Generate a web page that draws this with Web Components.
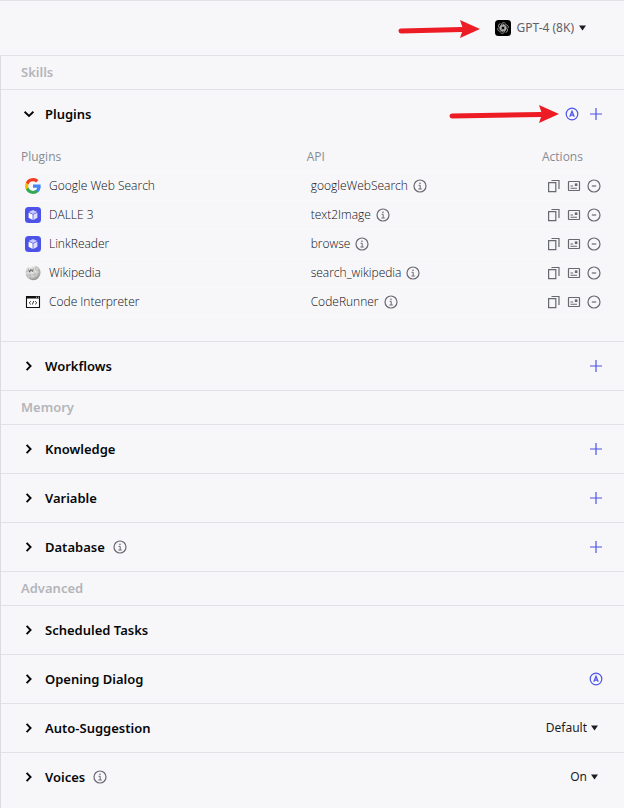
<!DOCTYPE html>
<html lang="en">
<head>
<meta charset="utf-8">
<title>Bot skills</title>
<style>
  html { background: #f7f7fa; }
  body { margin: 0; font-family: "Noto Sans", "Open Sans", sans-serif; color: #1c1d23; }
</style>
</head>
<body>
<bot-settings></bot-settings>
<script>
const define = (name, html, setup) => {
  const template = document.createElement('template');
  template.innerHTML = html;
  customElements.define(name, class extends HTMLElement {
    constructor() {
      super();
      this.attachShadow({ mode: 'open' }).append(template.content.cloneNode(true));
    }
    connectedCallback() { if (setup) setup(this, this.shadowRoot); }
  });
};

const icons = {
  info: '<circle cx="8" cy="8" r="6" stroke="currentColor" stroke-width="1.2"/><path d="M6.600 7.300h1.600v3.500M6.400 11h3.400" stroke="currentColor"/><circle cx="8" cy="5.200" r=".8" fill="currentColor"/>',
  plus: '<path d="M8 2v12M2 8h12" stroke="currentColor" stroke-width="1.200"/>',
  auto: '<circle cx="8" cy="8" r="5.800" stroke="currentColor" stroke-width="1.200"/><path d="M5.800 10.700 8 5.200l2.200 5.500M6.700 9.100h2.600" stroke="currentColor" stroke-width="1.200"/>',
  copy: '<path d="M2.600 4.600h7.200v9H2.600z" stroke="currentColor" stroke-width="1.200"/><path d="M5.500 2.500h7.500v8.500" stroke="currentColor" stroke-width="1.200"/>',
  card: '<rect x="2.500" y="3.500" width="11" height="9" rx=".5" stroke="currentColor" stroke-width="1.200"/><path d="M4.500 8h2.600M4.500 10.300h6.500" stroke="currentColor" stroke-width="1.100"/><path d="M8.800 5.400h2.600v2.600H8.800z" fill="currentColor"/>',
  minus: '<circle cx="8" cy="8" r="6" stroke="currentColor" stroke-width="1.200"/><path d="M5.800 8h4.400" stroke="currentColor" stroke-width="1.200"/>',
  right: '<path d="m5.600 3.800 4 4.200-4 4.200" stroke="currentColor" stroke-width="1.900"/>',
  down: '<path d="M3.600 5.700 8 10l4.400-4.300" stroke="currentColor" stroke-width="1.900"/>',
  google: '<path fill="#4285f4" d="M15.700 8.200c0-.6-.1-1.100-.2-1.600H8v3.100h4.300a3.700 3.700 0 0 1-1.600 2.400v2h2.600c1.500-1.400 2.400-3.400 2.400-5.900z"/><path fill="#34a853" d="M8 16c2.200 0 4-.7 5.300-1.900l-2.600-2A4.800 4.800 0 0 1 3.500 9.500H.9v2.100A8 8 0 0 0 8 16z"/><path fill="#fbbc05" d="M3.500 9.500a4.800 4.800 0 0 1 0-3.100V4.400H.9a8 8 0 0 0 0 7.200z"/><path fill="#f33b21" d="M8 3.200c1.200 0 2.300.4 3.100 1.200l2.300-2.300A8 8 0 0 0 .9 4.400l2.600 2.100A4.800 4.800 0 0 1 8 3.200z"/>',
  cube: '<rect width="16" height="16" rx="3.500" fill="#4d53e8"/><path fill="#c8caff" d="m8 3 4.300 1.900L8 6.900 3.700 4.900z"/><path fill="#fff" d="m3.600 5.700 4 1.800v5.400l-4-2.100z"/><path fill="#dddeff" d="m12.400 5.700-4 1.800v5.400l4-2.100z"/>',
  wiki: '<defs><radialGradient id="globe" cx=".4" cy=".35" r=".7"><stop stop-color="#f2f2f0"/><stop offset=".6" stop-color="#cececc"/><stop offset="1" stop-color="#858585"/></radialGradient></defs><path fill="url(#globe)" d="M2.200 2.800 4 2l1.500 1.200L7 1.300l2 .7L10.500.8c3 1 5 3.600 5 6.700A7.500 7.500 0 0 1 8 15.200 7.500 7.500 0 0 1 .6 8c0-2 .6-3.800 1.600-5.200z"/><path d="M1 6.500 4.500 6l1-2.500M10.500 4.900l.7-3M4.500 6l.8 4 4-.6L8.500 5M9.300 9.400l5.500-.7M10.500 5l4.300.5M5.300 10l.7 4.500M9.300 9.400l1.700 4.800M1.200 10.400l4-.4" stroke="#a2a2a0" stroke-width=".5"/><path d="m3.500 4.500 1.300 2.600L6 4.300l1.300 2.400 1-3" stroke="#555" stroke-width=".8"/>',
  code: '<path d="M1.500 2.500h13v11h-13z" fill="#fff" stroke="#111" stroke-width="1.100"/><path d="M1 2h14v2.500H1z" fill="#111"/><path d="M11 3.200h1M13 3.200h1" stroke="#fff" stroke-width=".8"/><path d="M5.900 7.200 4.200 8.800l1.700 1.600M10.100 7.200l1.700 1.600-1.700 1.600M8.700 7l-1.400 3.600" stroke="#222" stroke-width=".9"/>',
  gpt: '<rect width="16" height="16" rx="3.500" fill="#000"/><g stroke="#c4c4c4" stroke-width=".7">' + [0, 60, 120, 180, 240, 300].map(a => `<path transform="rotate(${a} 8 8)" d="M6.300 9V4.900A2.400 2.400 0 0 1 10.500 3.500M6.300 5.900 8 4.900l3.600 2.100"/>`).join('') + '</g>',
};

define('ui-icon', `
  <style>
    :host { display: inline-flex; flex: none; width: 16px; height: 16px; }
    svg { display: block; width: 100%; height: 100%; }
  </style>
  <svg viewBox="0 0 16 16" fill="none" aria-hidden="true"></svg>`,
  (el, root) => { root.querySelector('svg').innerHTML = icons[el.getAttribute('name')]; });

define('icon-button', `
  <style>
    :host { display: inline-flex; flex: none; color: var(--icon-color, #686970); }
    button { display: flex; margin: 0; padding: 0; border: 0; background: none; color: inherit; cursor: pointer; }
  </style>
  <button type="button"></button>`,
  (el, root) => {
    const button = root.querySelector('button');
    button.setAttribute('aria-label', el.getAttribute('label'));
    button.innerHTML = `<ui-icon name="${el.getAttribute('name')}"></ui-icon>`;
  });

define('value-select', `
  <style>
    :host { display: inline-flex; color: #1c1d23; }
    label { display: flex; align-items: center; gap: var(--value-gap, 4px); }
    select { appearance: none; field-sizing: content; margin: 0; padding: 0; border: 0; background: none;
             font: 12px/20px "Noto Sans", sans-serif; color: var(--value-color, inherit); }
    svg { width: 7px; height: 6px; }
  </style>
  <label><slot></slot><select></select>
    <svg viewBox="0 0 7 6" aria-hidden="true"><path d="M0 .5h7L3.500 5.500z" fill="#1c1d23"/></svg></label>`,
  (el, root) => {
    const select = root.querySelector('select');
    select.setAttribute('aria-label', el.getAttribute('label'));
    select.replaceChildren(new Option(el.getAttribute('value')));
  });

define('group-label', `
  <style>
    :host { display: block; padding: 0 20px; border-bottom: 1px solid #e2e2e6; }
    h2 { margin: 0; font-size: 13px; font-weight: 600; line-height: 33px; color: #b4b5b9; }
  </style>
  <h2><slot></slot></h2>`);

define('settings-section', `
  <style>
    :host { display: block; border-bottom: 1px solid #e2e2e6; }
    header { display: flex; align-items: center; height: 48px; padding: 0 20px; }
    h3 { margin: 0; font-size: 13px; font-weight: 600; line-height: 20px; color: #060709; }
    .toggle { display: flex; align-items: center; gap: 8px; margin: 0; padding: 0; border: 0;
              background: none; font: inherit; color: inherit; cursor: pointer; }
    .mark { display: flex; }
    .actions { display: flex; align-items: center; gap: 8px; margin-left: auto; --icon-color: #4d53e8; }
  </style>
  <header>
    <h3><button class="toggle" type="button"><span class="mark"></span><span class="text"></span></button></h3>
    <slot name="info"></slot>
    <div class="actions"><slot name="actions"></slot></div>
  </header>
  <slot></slot>`,
  (el, root) => {
    const open = el.hasAttribute('open');
    root.querySelector('.mark').innerHTML = `<ui-icon name="${open ? 'down' : 'right'}"></ui-icon>`;
    root.querySelector('.text').textContent = el.getAttribute('heading');
    root.querySelector('.toggle').setAttribute('aria-expanded', open);
  });

define('plugin-table', `
  <style>
    :host { display: block; padding: 5px 20px 24px; font-family: "Open Sans", "Noto Sans", sans-serif; }
    table { width: 100%; table-layout: fixed; border-collapse: collapse; font-size: 12px; line-height: 20px; }
    th, td { height: 28px; padding: 0; text-align: left; border-bottom: 1px solid #f9f9fb; white-space: nowrap; }
    th { font-weight: 400; color: #888a92; }
    td { font-weight: 300; color: #0c0d12; }
    th:first-child { width: 49%; }
    th:last-child { width: 62px; }
    td > div { display: flex; align-items: center; padding-left: 4px; }
    .name { gap: 8px; }
    .api, .tools { gap: 4px; }
  </style>
  <table>
    <thead><tr><th>Plugins</th><th>API</th><th>Actions</th></tr></thead>
    <tbody></tbody>
  </table>`,
  (el, root) => {
    root.querySelector('tbody').innerHTML = [
      ['google', 'Google Web Search', 'googleWebSearch'],
      ['cube', 'DALLE 3', 'text2Image'],
      ['cube', 'LinkReader', 'browse'],
      ['wiki', 'Wikipedia', 'search_wikipedia'],
      ['code', 'Code Interpreter', 'CodeRunner'],
    ].map(([icon, name, api]) => `<tr>
      <td><div class="name"><ui-icon name="${icon}"></ui-icon><span>${name}</span></div></td>
      <td><div class="api"><span>${api}</span><icon-button name="info" label="About ${api}"></icon-button></div></td>
      <td><div class="tools"><icon-button name="copy" label="Copy"></icon-button><icon-button name="card" label="Bind card"></icon-button><icon-button name="minus" label="Remove"></icon-button></div></td>
    </tr>`).join('');
  });

define('pointer-arrow', `
  <style>
    :host { position: absolute; height: 20px; pointer-events: none; }
    svg { display: block; height: 100%; }
  </style>
  <svg fill="none" aria-hidden="true"></svg>`,
  (el, root) => {
    const length = Number(el.getAttribute('length'));
    const svg = root.querySelector('svg');
    svg.setAttribute('width', length);
    svg.setAttribute('viewBox', `0 0 ${length} 20`);
    svg.innerHTML = `<path d="M3 12 ${length - 18} 10.500" stroke="#ed1c24" stroke-width="5" stroke-linecap="round"/>
      <path d="m${length - 20} 1 20 9-20 9 3-9z" fill="#ed1c24"/>`;
  });

define('bot-settings', `
  <style>
    :host { display: flex; flex-direction: column; min-height: 100vh; box-sizing: border-box;
            background: #f7f7fa; border-top: 1px solid #e2e2e6; }
    .top { position: relative; display: flex; justify-content: flex-end; align-items: center;
           height: 54px; padding: 0 38px 0 20px; border-bottom: 1px solid #e2e2e6; }
    .top value-select { --value-color: #5f6068; --value-gap: 5px; }
    .top pointer-arrow { right: 144px; top: 18px; }
    .panel { flex: 1; border-left: 1px solid #dcdce1; }
    .plugins { position: relative; }
    .plugins pointer-arrow { right: 65px; top: 14px; }
    settings-section > value-select { margin-right: 6px; }
    settings-section > icon-button[slot=info] { margin-left: 7px; }
    settings-section:last-child { border-bottom: 0; }
  </style>
  <header class="top">
    <value-select label="Model" value="GPT-4 (8K)"><ui-icon name="gpt"></ui-icon></value-select>
    <pointer-arrow length="82"></pointer-arrow>
  </header>
  <main class="panel">
    <group-label>Skills</group-label>
    <settings-section class="plugins" heading="Plugins" open>
      <icon-button slot="actions" name="auto" label="Add plugins automatically"></icon-button>
      <icon-button slot="actions" name="plus" label="Add plugin"></icon-button>
      <plugin-table></plugin-table>
      <pointer-arrow length="110"></pointer-arrow>
    </settings-section>
    <settings-section heading="Workflows"><icon-button slot="actions" name="plus" label="Add workflow"></icon-button></settings-section>
    <group-label>Memory</group-label>
    <settings-section heading="Knowledge"><icon-button slot="actions" name="plus" label="Add knowledge"></icon-button></settings-section>
    <settings-section heading="Variable"><icon-button slot="actions" name="plus" label="Add variable"></icon-button></settings-section>
    <settings-section heading="Database">
      <icon-button slot="info" name="info" label="About Database"></icon-button>
      <icon-button slot="actions" name="plus" label="Add database"></icon-button>
    </settings-section>
    <group-label>Advanced</group-label>
    <settings-section heading="Scheduled Tasks"></settings-section>
    <settings-section heading="Opening Dialog"><icon-button slot="actions" name="auto" label="Generate opening dialog"></icon-button></settings-section>
    <settings-section heading="Auto-Suggestion"><value-select slot="actions" label="Auto-Suggestion" value="Default"></value-select></settings-section>
    <settings-section heading="Voices">
      <icon-button slot="info" name="info" label="About Voices"></icon-button>
      <value-select slot="actions" label="Voices" value="On"></value-select>
    </settings-section>
  </main>`);
</script>
</body>
</html>
